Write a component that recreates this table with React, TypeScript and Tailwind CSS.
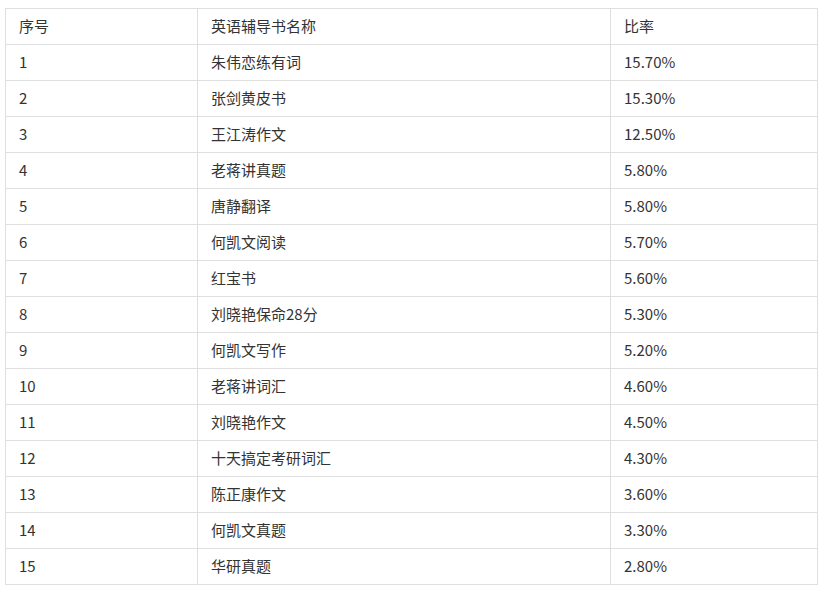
import React from "react";

const rows: [string, string, string][] = [
  ["1", "朱伟恋练有词", "15.70%"],
  ["2", "张剑黄皮书", "15.30%"],
  ["3", "王江涛作文", "12.50%"],
  ["4", "老蒋讲真题", "5.80%"],
  ["5", "唐静翻译", "5.80%"],
  ["6", "何凯文阅读", "5.70%"],
  ["7", "红宝书", "5.60%"],
  ["8", "刘晓艳保命28分", "5.30%"],
  ["9", "何凯文写作", "5.20%"],
  ["10", "老蒋讲词汇", "4.60%"],
  ["11", "刘晓艳作文", "4.50%"],
  ["12", "十天搞定考研词汇", "4.30%"],
  ["13", "陈正康作文", "3.60%"],
  ["14", "何凯文真题", "3.30%"],
  ["15", "华研真题", "2.80%"],
];

const cell = "border border-[#dfdfdf] p-0 pl-[13px] pb-[2px] leading-none";

export default function App() {
  return (
    <div
      className="w-[824px] h-[593px] bg-white pt-[8px] pl-[5px]"
      style={{ fontFamily: '"Noto Sans CJK SC", "Noto Sans", sans-serif' }}
    >
      <table className="border-collapse text-[15px] text-[#333333] w-[812px] table-fixed">
        <colgroup>
          <col className="w-[192px]" />
          <col className="w-[413px]" />
          <col className="w-[207px]" />
        </colgroup>
        <tbody>
          <tr className="h-[36px]">
            <td className={cell}>序号</td>
            <td className={cell}>英语辅导书名称</td>
            <td className={cell}>比率</td>
          </tr>
          {rows.map((r) => (
            <tr key={r[0]} className="h-[36px]">
              <td className={cell}>{r[0]}</td>
              <td className={cell}>{r[1]}</td>
              <td className={cell}>{r[2]}</td>
            </tr>
          ))}
        </tbody>
      </table>
    </div>
  );
}
